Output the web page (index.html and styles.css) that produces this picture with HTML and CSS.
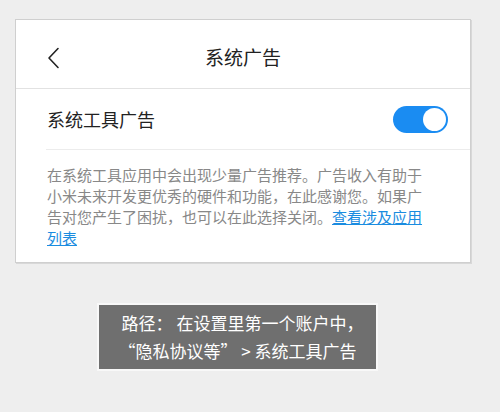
FILE: index.html
```html
<!DOCTYPE html>
<html lang="zh-CN">
<head>
<meta charset="utf-8">
<title>系统广告</title>
<link rel="stylesheet" href="styles.css">
</head>
<body>
<div class="card">
  <div class="header">
    <svg class="back" width="14" height="22" viewBox="0 0 14 22"><polyline points="11,1.5 2,11 11,20.5" fill="none" stroke="#222" stroke-width="1.6" stroke-linecap="round" stroke-linejoin="round"/></svg>
    <div class="title">系统广告</div>
  </div>
  <div class="row">
    <div class="label">系统工具广告</div>
    <div class="toggle"><div class="knob"></div></div>
  </div>
  <p class="desc">在系统工具应用中会出现少量广告推荐。广告收入有助于小米未来开发更优秀的硬件和功能，在此感谢您。如果广告对您产生了困扰，也可以在此选择关闭。<a class="link">查看涉及应用列表</a></p>
</div>
<div class="path">
  <div class="line1">路径：&nbsp;在设置里第一个账户中，</div>
  <div>“隐私协议等”&nbsp;&gt; 系统工具广告</div>
</div>
</body>
</html>
```
FILE: styles.css
```css
html, body {
  margin: 0;
  padding: 0;
  background: #eeeeee;
  font-family: "Noto Sans CJK SC", "Noto Sans", sans-serif;
}
body {
  width: 500px;
  height: 412px;
  overflow: hidden;
}
.card {
  margin: 19px 0 0 15px;
  width: 454px;
  height: 242px;
  background: #fff;
  border: 1px solid #cfcfcf;
  box-shadow: 1px 1px 0 #d8d8d8;
}
.header {
  position: relative;
  height: 68px;
  border-bottom: 1px solid #e2e2e2;
  display: flex;
  align-items: center;
  justify-content: center;
}
.back {
  position: absolute;
  left: 31px;
  top: 27px;
}
.title {
  font-size: 19px;
  color: #222;
  margin: 4px 0 0 0;
}
.row {
  height: 60px;
  margin-left: 30px;
  padding-right: 22px;
  border-bottom: 1px solid #ececec;
  display: flex;
  align-items: center;
  justify-content: space-between;
}
.label {
  font-size: 18px;
  color: #222;
  margin-left: 1px;
}
.toggle {
  width: 55px;
  height: 27px;
  border-radius: 14px;
  background: #1a8cf2;
  position: relative;
}
.knob {
  position: absolute;
  right: 2px;
  top: 2px;
  width: 23px;
  height: 23px;
  border-radius: 50%;
  background: #fff;
}
.desc {
  margin: 14px 0 0 31px;
  width: 380px;
  font-size: 15px;
  line-height: 21px;
  color: #888888;
}
.link {
  color: #1a8ce0;
  text-decoration: underline;
}
.path {
  margin: 40px 0 0 97px;
  width: 277px;
  height: 64px;
  background: #6f6f6f;
  border: 2px solid #f8f8f8;
  color: #fff;
  font-size: 17px;
  line-height: 28px;
  text-align: center;
  display: flex;
  flex-direction: column;
  justify-content: center;
}
.line1 {
  padding-left: 10px;
}
```
